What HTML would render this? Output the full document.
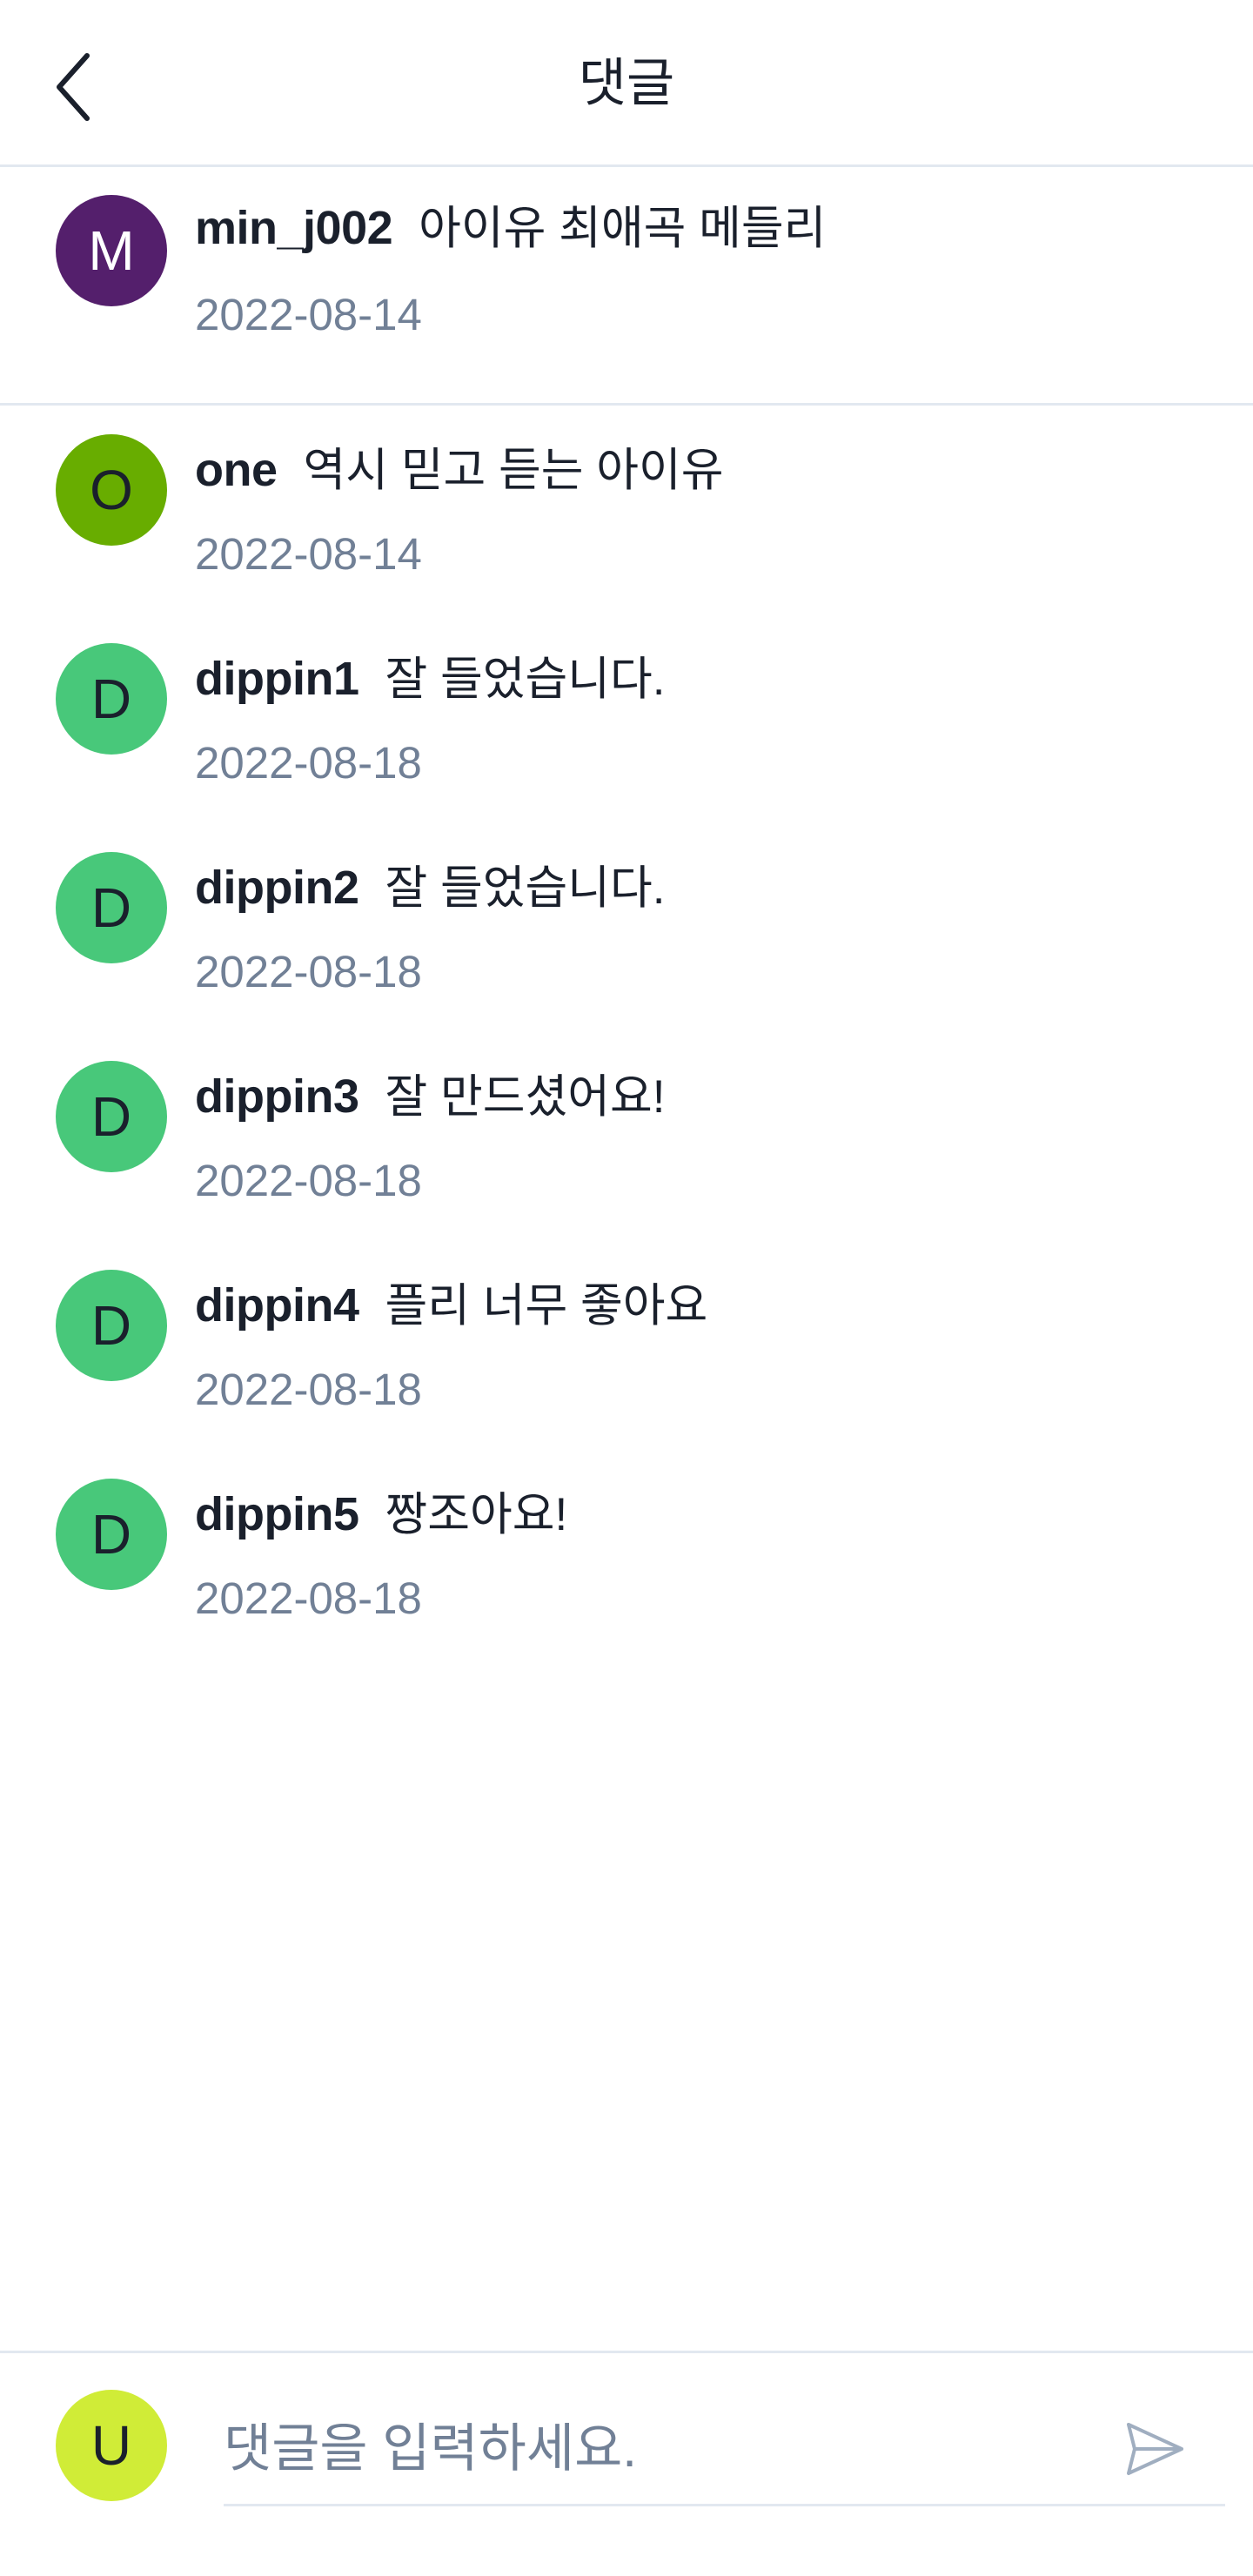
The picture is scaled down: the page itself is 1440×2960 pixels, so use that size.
<!DOCTYPE html>
<html><head><meta charset="utf-8"><style>
*{margin:0;padding:0;box-sizing:border-box}
body{width:1440px;height:2960px;background:#fff;position:relative;font-family:"Liberation Sans","Noto Sans CJK KR",sans-serif;color:#1a202c;overflow:hidden}
.abs{position:absolute}
.hr{position:absolute;left:0;width:1440px;height:3px;background:#e2e8f0}
.av{position:absolute;left:64px;width:128px;height:128px;border-radius:50%;text-align:center;line-height:128px;font-size:64px;color:#1a202c}
.line{position:absolute;left:224px;height:60px;line-height:60px;font-size:54px;white-space:nowrap}
.line b{font-weight:bold;letter-spacing:-0.5px}
.line span{margin-left:30px;font-size:53px}
.date{position:absolute;left:224px;height:60px;line-height:60px;font-size:51px;color:#718096}
</style></head><body>
<svg class="abs" style="left:60px;top:58px" width="50" height="84" viewBox="0 0 50 84"><path d="M40 6 L8 42 L40 78" fill="none" stroke="#1a202c" stroke-width="6" stroke-linecap="round" stroke-linejoin="round"/></svg>
<div class="abs" style="left:0;width:1440px;top:58px;text-align:center;font-size:60px;line-height:76px">댓글</div>
<div class="hr" style="top:189px"></div>

<div class="av" style="top:224px;background:#541f6c;color:#fff">M</div>
<div class="line" style="top:232px"><b>min_j002</b><span>아이유 최애곡 메들리</span></div>
<div class="date" style="top:332px">2022-08-14</div>
<div class="hr" style="top:463px"></div>

<div class="av" style="top:499px;background:#68ad00">O</div>
<div class="line" style="top:510px"><b>one</b><span>역시 믿고 듣는 아이유</span></div>
<div class="date" style="top:607px">2022-08-14</div>

<div class="av" style="top:739px;background:#48c87a">D</div>
<div class="line" style="top:750px"><b>dippin1</b><span>잘 들었습니다.</span></div>
<div class="date" style="top:847px">2022-08-18</div>

<div class="av" style="top:979px;background:#48c87a">D</div>
<div class="line" style="top:990px"><b>dippin2</b><span>잘 들었습니다.</span></div>
<div class="date" style="top:1087px">2022-08-18</div>

<div class="av" style="top:1219px;background:#48c87a">D</div>
<div class="line" style="top:1230px"><b>dippin3</b><span>잘 만드셨어요!</span></div>
<div class="date" style="top:1327px">2022-08-18</div>

<div class="av" style="top:1459px;background:#48c87a">D</div>
<div class="line" style="top:1470px"><b>dippin4</b><span>플리 너무 좋아요</span></div>
<div class="date" style="top:1567px">2022-08-18</div>

<div class="av" style="top:1699px;background:#48c87a">D</div>
<div class="line" style="top:1710px"><b>dippin5</b><span>짱조아요!</span></div>
<div class="date" style="top:1807px">2022-08-18</div>

<div class="hr" style="top:2701px"></div>
<div class="av" style="top:2746px;background:#d0ec37">U</div>
<div class="abs" style="left:257px;top:2774px;font-size:60px;line-height:80px;color:#718096">댓글을 입력하세요.</div>
<div class="abs" style="left:257px;top:2877px;width:1151px;height:3px;background:#e2e8f0"></div>
<svg class="abs" style="left:1292px;top:2782px" width="72" height="64" viewBox="0 0 72 64"><path d="M5 4 L66 32 L5 60 L12 32 Z M12 32 L66 32" fill="none" stroke="#a0aec0" stroke-width="4" stroke-linejoin="round" stroke-linecap="round"/></svg>
</body></html>
